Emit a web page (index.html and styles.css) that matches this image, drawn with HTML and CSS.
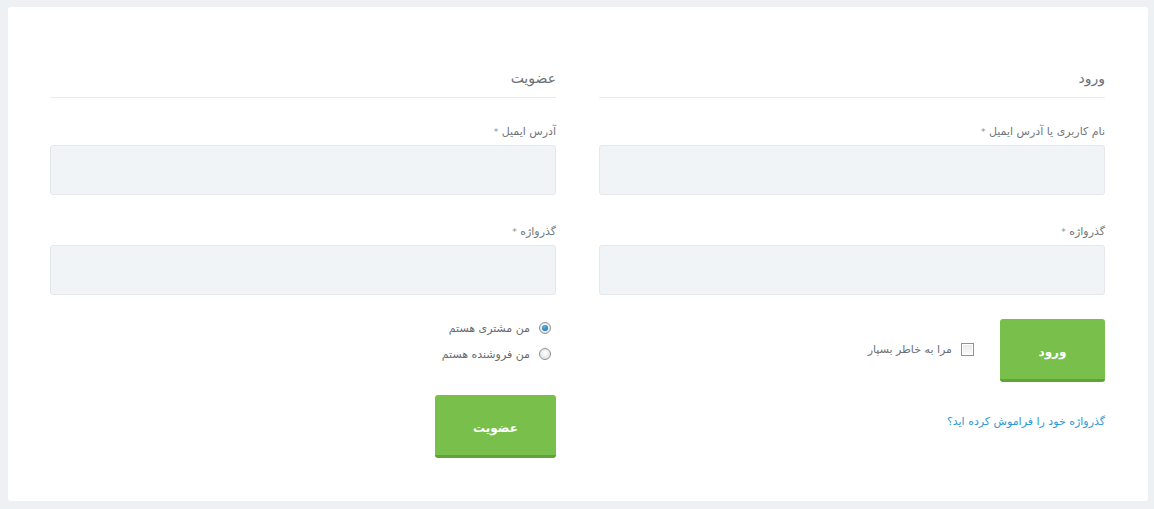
FILE: index.html
```html
<!DOCTYPE html>
<html lang="fa" dir="rtl">
<head>
<meta charset="utf-8">
<title>ورود / عضویت</title>
<link rel="stylesheet" href="styles.css">
</head>
<body>
<div class="card">
  <div class="col">
    <h2 class="title">ورود</h2>
    <div class="group first">
      <label class="lbl">نام کاربری یا آدرس ایمیل <span class="req">*</span></label>
      <div class="input"></div>
    </div>
    <div class="group">
      <label class="lbl">گذرواژه <span class="req">*</span></label>
      <div class="input"></div>
    </div>
    <div class="actions">
      <button class="btn btn-login">ورود</button>
      <label class="remember"><span class="checkbox"></span><span>مرا به خاطر بسپار</span></label>
    </div>
    <a class="lost" href="#">گذرواژه خود را فراموش کرده اید؟</a>
  </div>
  <div class="col">
    <h2 class="title">عضویت</h2>
    <div class="group first">
      <label class="lbl">آدرس ایمیل <span class="req">*</span></label>
      <div class="input"></div>
    </div>
    <div class="group">
      <label class="lbl">گذرواژه <span class="req">*</span></label>
      <div class="input"></div>
    </div>
    <div class="radios">
      <label class="radio-row"><span class="radio checked"></span><span>من مشتری هستم</span></label>
      <label class="radio-row"><span class="radio"></span><span>من فروشنده هستم</span></label>
    </div>
    <button class="btn btn-register">عضویت</button>
  </div>
</div>
</body>
</html>
```

FILE: styles.css
```css
html, body {
  margin: 0;
  padding: 0;
}
body {
  background: #eef1f4;
  padding: 7px 6px 8px 8px;
  font-family: "DejaVu Sans", "Noto Sans", sans-serif;
  color: #666b70;
}
.card {
  background: #fff;
  border-radius: 3px;
  height: 494px;
  box-sizing: border-box;
  padding: 61px 43px 0 42px;
  display: flex;
  gap: 43px;
  direction: rtl;
}
.col {
  flex: 1;
  display: flex;
  flex-direction: column;
  align-items: stretch;
}
.title {
  margin: 0;
  font-size: 14px;
  font-weight: normal;
  line-height: 20px;
  padding-bottom: 9px;
  border-bottom: 1px solid #eaedf0;
  color: #6a7076;
}
.group {
  margin-top: 29px;
}
.group.first {
  margin-top: 26px;
}
.lbl {
  display: block;
  font-size: 11px;
  line-height: 16px;
  color: #70767c;
  margin-bottom: 5px;
}
.req {
  color: #8a8f94;
  font-size: 9px;
}
.input {
  height: 48px;
  background: #f1f4f7;
  border: 1px solid #e4e8ec;
  border-radius: 3px;
}
.btn {
  font-family: "DejaVu Sans", sans-serif;
  font-weight: bold;
  font-size: 12px;
  color: #fff;
  background: #78c04b;
  border: none;
  border-bottom: 3px solid #5ea537;
  border-radius: 3px;
  height: 63px;
  padding: 6px 0 0;
  cursor: pointer;
}
.actions {
  margin-top: 24px;
  display: flex;
  align-items: center;
  gap: 26px;
}
.btn-login {
  width: 105px;
}
.remember {
  display: flex;
  align-items: center;
  gap: 9px;
  font-size: 11px;
  color: #6b7076;
  margin-top: -3px;
}
.checkbox {
  width: 11px;
  height: 11px;
  border: 1px solid #8d9297;
  background: linear-gradient(#e8e9ea, #fbfbfb);
  box-shadow: inset 0 0 0 1px #fff;
}
.lost {
  margin-top: 32px;
  font-size: 11px;
  line-height: 16px;
  color: #2f98d3;
  text-decoration: none;
  align-self: flex-start;
}
.radios {
  margin-top: 20px;
  display: flex;
  flex-direction: column;
}
.radio-row {
  display: flex;
  align-items: center;
  gap: 9px;
  height: 26px;
  font-size: 11px;
  color: #666b70;
  align-self: flex-start;
  margin-right: 5px;
}
.radio {
  width: 10px;
  height: 10px;
  border-radius: 50%;
  border: 1px solid #8c9196;
  background: radial-gradient(circle at 50% 40%, #ffffff, #d8dadc);
  position: relative;
}
.radio.checked::after {
  content: "";
  position: absolute;
  left: 2px;
  top: 2px;
  width: 6px;
  height: 6px;
  border-radius: 50%;
  background: radial-gradient(circle at 40% 35%, #5db4ea, #0f5e96);
}
.btn-register {
  margin-top: 28px;
  width: 121px;
  align-self: flex-start;
}
```
